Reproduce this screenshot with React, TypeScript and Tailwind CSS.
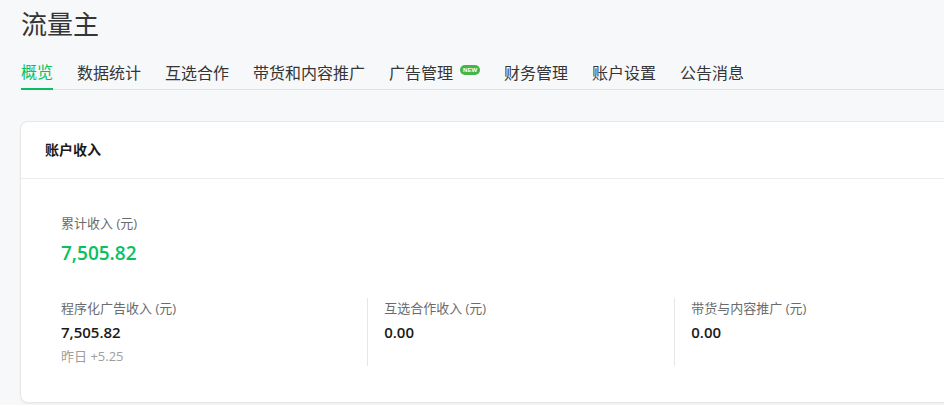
import { useState } from 'react';

const tabs = [
  { id: 'overview', label: '概览' },
  { id: 'stats', label: '数据统计' },
  { id: 'coop', label: '互选合作' },
  { id: 'promotion', label: '带货和内容推广' },
  { id: 'ads', label: '广告管理', isNew: true },
  { id: 'finance', label: '财务管理' },
  { id: 'account', label: '账户设置' },
  { id: 'notice', label: '公告消息' },
];

const incomes = [
  { label: '程序化广告收入 (元)', value: '7,505.82', note: '昨日 +5.25' },
  { label: '互选合作收入 (元)', value: '0.00' },
  { label: '带货与内容推广 (元)', value: '0.00' },
];

function NewBadge() {
  return (
    <span className="-mt-1.5 ml-[7px] flex h-[10px] w-5 items-center justify-center rounded-full bg-[#44b549] font-['Liberation_Sans'] text-[6px] leading-none font-bold text-white">
      NEW
    </span>
  );
}

export default function App() {
  const [active, setActive] = useState('overview');

  return (
    <div className="min-h-screen bg-[#f7f8fa] pt-2 pb-[2px] pl-[21px] font-['Open_Sans','Noto_Sans_CJK_SC',sans-serif] text-[#353535]">
      <h1 className="text-[26px] leading-8">流量主</h1>

      <nav className="mt-4 flex h-[34px] items-center gap-6 border-b border-[#e0e1e3] whitespace-nowrap">
        {tabs.map((tab) => (
          <a
            key={tab.id}
            href={`#${tab.id}`}
            onClick={() => setActive(tab.id)}
            className={
              active === tab.id
                ? 'flex h-[34px] items-center border-b-2 border-[#07c160] text-base text-[#07c160]'
                : 'flex h-8 items-center text-base'
            }
          >
            {tab.label}
            {tab.isNew && <NewBadge />}
          </a>
        ))}
      </nav>

      <section className="mt-[31px] -ml-px rounded-l-lg border border-r-0 border-[#e7e8ea] bg-white shadow-xs">
        <header className="border-b border-[#ededee] px-6 py-[18px]">
          <h2 className="text-sm font-bold text-[#1a1a1a]">账户收入</h2>
        </header>

        <div className="pt-[34px] pb-9 pl-10">
          <div>
            <p className="text-[13px] leading-5 text-[#6b6b6b]">累计收入 (元)</p>
            <p className="text-[19px] leading-10 font-semibold text-[#07c160]">7,505.82</p>
          </div>

          <div className="mt-[25px] grid grid-cols-[8fr_8fr_7fr]">
            {incomes.map((item) => (
              <div
                key={item.label}
                className="border-r border-[#e7e7e7] pl-4 first:pl-0 last:border-r-0"
              >
                <p className="text-[13px] leading-5 text-[#6b6b6b]">{item.label}</p>
                <p className="text-[15px] leading-7 font-semibold text-[#1a1a1a]">{item.value}</p>
                {item.note && <p className="text-[13px] leading-5 text-[#9e9e9e]">{item.note}</p>}
              </div>
            ))}
          </div>
        </div>
      </section>
    </div>
  );
}
